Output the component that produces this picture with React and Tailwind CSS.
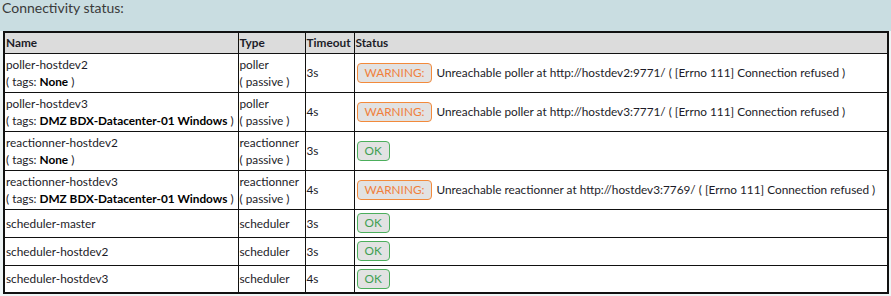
const rows = [
  {
    name: "poller-hostdev2",
    tags: "None",
    type: "poller",
    passive: true,
    timeout: "3s",
    ok: false,
    msg: "Unreachable poller at http://hostdev2:9771/ ( [Errno 111] Connection refused )",
  },
  {
    name: "poller-hostdev3",
    tags: "DMZ BDX-Datacenter-01 Windows",
    type: "poller",
    passive: true,
    timeout: "4s",
    ok: false,
    msg: "Unreachable poller at http://hostdev3:7771/ ( [Errno 111] Connection refused )",
  },
  {
    name: "reactionner-hostdev2",
    tags: "None",
    type: "reactionner",
    passive: true,
    timeout: "3s",
    ok: true,
  },
  {
    name: "reactionner-hostdev3",
    tags: "DMZ BDX-Datacenter-01 Windows",
    type: "reactionner",
    passive: true,
    timeout: "4s",
    ok: false,
    msg: "Unreachable reactionner at http://hostdev3:7769/ ( [Errno 111] Connection refused )",
  },
  { name: "scheduler-master", type: "scheduler", timeout: "3s", ok: true },
  { name: "scheduler-hostdev2", type: "scheduler", timeout: "3s", ok: true },
  { name: "scheduler-hostdev3", type: "scheduler", timeout: "4s", ok: true },
];

function Badge({ ok }) {
  if (ok) {
    return (
      <span className="inline-block h-[20px] leading-[18px] px-[7px] rounded-[4px] border border-[#4cae5c] bg-[#e2e2e2] text-[#3f9f52]">
        OK
      </span>
    );
  }
  return (
    <span className="inline-block h-[20px] leading-[18px] px-[7px] rounded-[4px] border border-[#f28a3c] bg-[#e2e2e2] text-[#f0803c]">
      WARNING:
    </span>
  );
}

export default function App() {
  return (
    <div
      className="w-[891px] h-[296px] bg-[#eef4f5] text-[11.8px] text-[#1c1c28] overflow-hidden"
      style={{ fontFamily: "Lato, 'Open Sans', sans-serif" }}
    >
      {/* Panel heading */}
      <div className="h-[31px] bg-[#c9dde1] px-[2px] text-[14px] text-[#3a3a3a] leading-[16px]">
        Connectivity status:
      </div>

      <div className="px-[3px]">
        <table className="w-[886px] table-fixed border-collapse border-2 border-[#111] bg-white leading-[17px] whitespace-nowrap">
          <colgroup>
            <col className="w-[234px]" />
            <col className="w-[67px]" />
            <col className="w-[49px]" />
            <col />
          </colgroup>
          <thead>
            <tr className="bg-[#dcdcdc] h-[21px]">
              <th className="border border-[#111] px-[1px] text-left font-bold">Name</th>
              <th className="border border-[#111] px-[1px] text-left font-bold">Type</th>
              <th className="border border-[#111] px-[1px] text-left font-bold">Timeout</th>
              <th className="border border-[#111] px-[1px] text-left font-bold">Status</th>
            </tr>
          </thead>
          <tbody>
            {rows.map((r) => (
              <tr key={r.name} className={r.tags ? "h-[39px]" : "h-[28px]"}>
                <td className="border border-[#111] px-[1px] py-[1px] align-middle">
                  <div>{r.name}</div>
                  {r.tags && (
                    <div>
                      ( tags: <span className="font-bold text-black">{r.tags}</span> )
                    </div>
                  )}
                </td>
                <td className="border border-[#111] px-[1px] py-[1px] align-middle">
                  <div>{r.type}</div>
                  {r.passive && <div>( passive )</div>}
                </td>
                <td className="border border-[#111] px-[1px] align-middle">{r.timeout}</td>
                <td className="border border-[#111] px-[2px] align-middle">
                  <div className="flex items-center gap-[4px]">
                    <Badge ok={r.ok} />
                    {r.msg && <span>{r.msg}</span>}
                  </div>
                </td>
              </tr>
            ))}
          </tbody>
        </table>
      </div>
    </div>
  );
}
